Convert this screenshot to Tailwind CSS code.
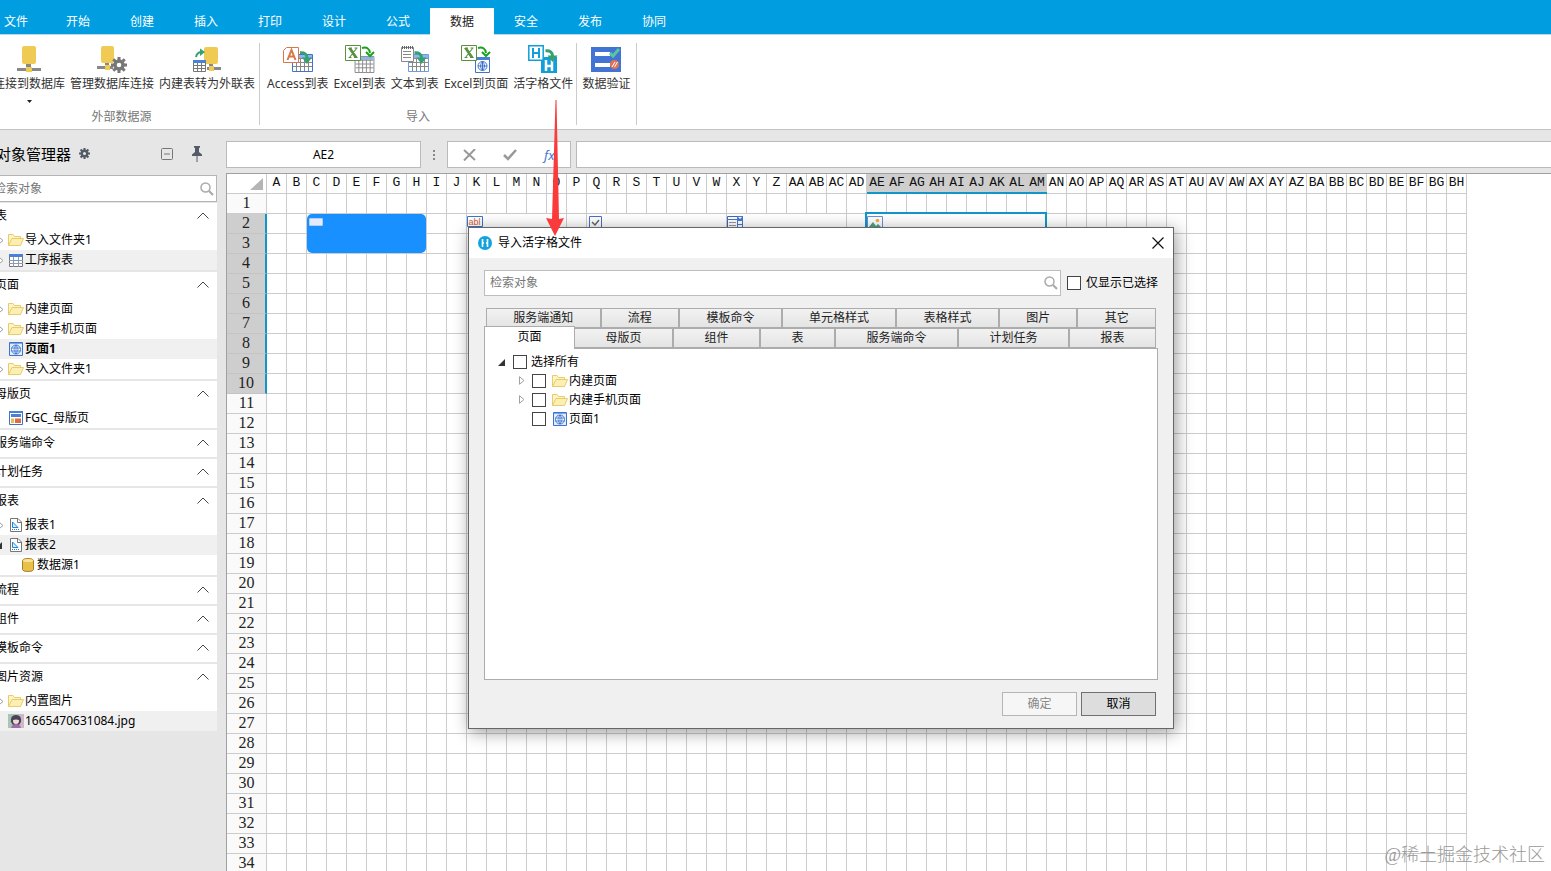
<!DOCTYPE html>
<html lang="zh-CN">
<head>
    <meta charset="UTF-8">
    <meta name="viewport" content="width=device-width, initial-scale=1.0">
    <title>活字格设计器</title>
    <script src="https://cdn.jsdelivr.net/npm/@tailwindcss/browser@4"></script>
</head>
<body class="relative flex flex-col h-screen overflow-hidden bg-[#e6e6e6] text-[12px] leading-4 text-black font-['Noto_Sans','Noto_Sans_CJK_SC',sans-serif]">

    <!-- icons -->
    <svg class="hidden">
        <symbol id="folder" viewBox="0 0 16 14">
            <path d="M.5 12.5V1.5H5l1.500 2h6v2.500" fill="#fdf3c4" stroke="#e8cb6a"/>
            <path d="M.5 12.500 4 5.500h11.500L12.500 12.500z" fill="#fcefb4" stroke="#e8cb6a"/>
        </symbol>
        <symbol id="page" viewBox="0 0 14 14">
            <path d="M.5.5h13v13H.5z" fill="#e4edfb" stroke="#3b73cf"/>
            <path d="M1 1h12v1H1z" fill="#7ea6e6"/>
            <circle cx="7" cy="7.500" r="4.500" fill="#fff" stroke="#3b73cf"/>
            <path d="M2.500 6h9M2.500 9h9M7 3v9M7 3Q3 7.500 7 12M7 3q4 4.500 0 9" fill="none" stroke="#3b73cf" stroke-width=".8"/>
        </symbol>
        <symbol id="table" viewBox="0 0 14 13">
            <path d="M.5.5h13v12H.5z" fill="#fff" stroke="#777"/>
            <path d="M0 0h14v3H0z" fill="#4a80d8"/>
            <path d="M0 6.500h14M0 9.500h14M4.500 3v10M9.500 3v10" stroke="#8a9bb5"/>
        </symbol>
        <symbol id="master" viewBox="0 0 14 14">
            <path d="M.5.5h13v13H.5z" fill="#fff" stroke="#3b73cf"/>
            <path d="M0 0h14v2H0zM2 3h10v3H2z" fill="#4a80d8"/>
            <path d="M2 7.500h3v4.500H2z" fill="#efb94e"/><path d="M6 7.500h6v4.500H6z" fill="#dd6b45"/>
        </symbol>
        <symbol id="report" viewBox="0 0 12 14">
            <path d="M.5.5H8L11.500 4v9.500H.5z" fill="#fff" stroke="#777"/><path d="M7.500.5v4h4" fill="none" stroke="#777"/>
            <path d="M2.500 4v5.500H8z" fill="#d7ebfb" stroke="#2284d8"/>
            <path d="M2 11.500h8" stroke="#2284d8" stroke-dasharray="1 1"/>
        </symbol>
        <symbol id="up" viewBox="0 0 12 7"><path d="M.5 6.500 6 1l5.500 5.500" fill="none" stroke="#444"/></symbol>
        <symbol id="closed" viewBox="0 0 6 9"><path d="M.5.700v7.600L5 4.500z" fill="#fff" stroke="#a0a0a0"/></symbol>
        <symbol id="opened" viewBox="0 0 7 7"><path d="M7 0v7H0z" fill="#333"/></symbol>
        <symbol id="search" viewBox="0 0 14 14"><circle cx="5.500" cy="5.500" r="4.500" fill="none" stroke="#aaa" stroke-width="1.500"/><path d="m9 9 4 4" stroke="#aaa" stroke-width="2.200"/></symbol>
        <symbol id="gear" viewBox="0 0 16 16">
            <circle cx="8" cy="8" r="4" fill="none" stroke="currentColor" stroke-width="3.400"/>
            <path d="M8 0v3M8 13v3M0 8h3M13 8h3M2.300 2.300l2.200 2.200M11.500 11.500l2.200 2.200M13.700 2.300l-2.200 2.200M4.500 11.500l-2.200 2.200" stroke="currentColor" stroke-width="3"/>
        </symbol>
        <symbol id="grid" viewBox="0 0 21 18">
            <path d="M.5.5h20v17H.5z" fill="#fff" stroke="currentColor"/><path d="M1 1h19v3H1z" fill="#8fb4ef"/>
            <path d="M1 4.500h19M1 8.500h19M1 12.500h19M4.500 4v13M8.500 4v13M12.500 4v13M16.500 4v13" stroke="#888"/>
        </symbol>
        <symbol id="excel" viewBox="0 0 16 16">
            <path d="M.5.5h15v15H.5z" fill="#fff" stroke="#5a9140"/>
            <path d="M4 3.500h2l6 9h-2zM4 3h3M9.500 3h3M3.500 12.500h3M9 12.500h3.500M11.500 3.500 4.500 12.500" stroke="#5a9140" stroke-width="1.100" fill="#5a9140"/>
        </symbol>
        <symbol id="curve" viewBox="0 0 12 13"><path d="M0 1.800q7-.5 7 5.200" fill="none" stroke="currentColor" stroke-width="3"/><path d="M2 6.500h10L7 13z" fill="currentColor"/></symbol>
    </svg>

    <!-- menu tabs -->
    <nav class="flex shrink-0 items-end h-[34px] bg-[#019de1] text-white">
        <a href="#" class="w-[46px] pl-1 h-[26px] leading-7">文件</a>
        <a href="#" class="w-16 h-[26px] leading-7 text-center">开始</a>
        <a href="#" class="w-16 h-[26px] leading-7 text-center">创建</a>
        <a href="#" class="w-16 h-[26px] leading-7 text-center">插入</a>
        <a href="#" class="w-16 h-[26px] leading-7 text-center">打印</a>
        <a href="#" class="w-16 h-[26px] leading-7 text-center">设计</a>
        <a href="#" class="w-16 h-[26px] leading-7 text-center">公式</a>
        <a href="#" class="relative w-16 h-[27px] -mb-px leading-7 text-center bg-white text-[#222]">数据</a>
        <a href="#" class="w-16 h-[26px] leading-7 text-center">安全</a>
        <a href="#" class="w-16 h-[26px] leading-7 text-center">发布</a>
        <a href="#" class="w-16 h-[26px] leading-7 text-center">协同</a>
    </nav>

    <!-- ribbon -->
    <section class="flex shrink-0 h-24 pt-2 pb-1 bg-white border-t border-b border-t-[#b9d9ea] border-b-[#c4c4c4] text-[#333] whitespace-nowrap">
        <div class="flex flex-col justify-between w-[260px] border-r border-[#ccc]">
            <div class="flex items-start gap-[5px] -ml-[7px]">
                <button class="flex flex-col items-center">
                    <svg class="w-[30px] h-7 mt-[2px] mb-[3px]" viewBox="0 0 30 28"><rect x="8" y="1" width="14" height="18" rx="2" fill="#efcb55"/><path d="M12 19h5v4h-5zM3 23h24v3H3z" fill="#888"/><path d="M12 22h6v5h-6z" fill="#efcb55"/></svg>
                    连接到数据库
                    <svg class="w-[5px] h-[3px] mt-2" viewBox="0 0 5 3"><path d="M0 0h5L2.500 3z" fill="#222"/></svg>
                </button>
                <button class="flex flex-col items-center">
                    <svg class="w-[30px] h-7 mt-[2px] mb-[3px] text-[#777]" viewBox="0 0 30 28"><rect x="4" y="1" width="13" height="17" rx="2" fill="#efcb55"/><path d="M8 18h4v3H8zM0 21h16v3H0z" fill="#888"/><path d="M8 20h5v5H8z" fill="#efcb55"/><use href="#gear" x="14" y="12" width="16" height="16"/></svg>
                    管理数据库连接
                </button>
                <button class="flex flex-col items-center">
                    <svg class="w-[30px] h-7 mt-[2px] mb-[3px]" viewBox="0 0 30 28"><rect x="12" y="2" width="14" height="17" rx="2" fill="#efcb55"/><path d="M17 19h4v3h-4zM15 22h14v3H15z" fill="#888"/><path d="M17 21h5v5h-5z" fill="#efcb55"/><path d="M4 12q1-5 6-5" fill="none" stroke="#35a071" stroke-width="2"/><path d="M8 3.500 13 7l-5 4z" fill="#35a071"/><path d="M1.500 15.500h12v11h-12z" fill="#fff" stroke="#777"/><path d="M1 15h13v3H1z" fill="#4a80d8"/><path d="M1 20.500h13M1 23.500h13M5.500 18v9M9.500 18v9" stroke="#777"/></svg>
                    内建表转为外联表
                </button>
            </div>
            <div class="pr-4 text-center text-[#777]">外部数据源</div>
        </div>
        <div class="flex flex-col justify-between w-[317px] border-r border-[#ccc]">
            <div class="flex items-start gap-[5px] pl-[7px]">
                <button class="flex flex-col items-center">
                    <svg class="w-[30px] h-7 mt-[2px] mb-[3px]" viewBox="0 0 30 28"><use href="#grid" x="9" y="9" width="21" height="18" class="text-[#3b73cf]"/><path d="M3.500 2.500h12v15h-15v-12z" fill="#fff" stroke="#da7647"/><path d="m4.500 15 4-10 4 10M6 11.500h5" fill="none" stroke="#da7647" stroke-width="2"/><use href="#curve" x="17" y="6" width="12" height="13" class="text-[#35a071]"/></svg>
                    Access到表
                </button>
                <button class="flex flex-col items-center">
                    <svg class="w-[30px] h-7 mt-[2px] mb-[3px]" viewBox="0 0 30 28"><use href="#grid" x="9" y="11" width="21" height="17" class="text-[#888]"/><use href="#excel" x="0" y="0" width="16" height="16"/><path d="M17 3q7-2 8 5" fill="none" stroke="#18a418" stroke-width="2"/><path d="m21 7 4 4 4-4" fill="none" stroke="#18a418" stroke-width="2"/></svg>
                    Excel到表
                </button>
                <button class="flex flex-col items-center">
                    <svg class="w-[30px] h-7 mt-[2px] mb-[3px]" viewBox="0 0 30 28"><use href="#grid" x="8" y="9" width="21" height="18" class="text-[#6b9be8]"/><path d="M1.500 2.500h12v14h-12z" fill="#fff" stroke="#888"/><path d="M2 2.500h12" stroke="#666" stroke-width="3" stroke-dasharray="1 1"/><path d="M3 6.500h8M3 9.500h8M3 12.500h8" stroke="#888"/><use href="#curve" x="14" y="6" width="13" height="13" class="text-[#35a071]"/></svg>
                    文本到表
                </button>
                <button class="flex flex-col items-center">
                    <svg class="w-[30px] h-7 mt-[2px] mb-[3px]" viewBox="0 0 30 28"><path d="M14.500 12.500h14v15h-14z" fill="#fff" stroke="#3b73cf"/><path d="M14 12h15v3H14z" fill="#4a80d8"/><circle cx="21.500" cy="21" r="4.500" fill="#fff" stroke="#3b73cf"/><path d="M17 21h9M21.500 16.500v9M21.500 16.500q-4 4.500 0 9M21.500 16.500q4 4.500 0 9" fill="none" stroke="#3b73cf"/><use href="#excel" x="0" y="0" width="16" height="16"/><path d="M17 3q7-2 8 5" fill="none" stroke="#18a418" stroke-width="2"/><path d="m21 7 4 4 4-4" fill="none" stroke="#18a418" stroke-width="2"/></svg>
                    Excel到页面
                </button>
                <button class="flex flex-col items-center">
                    <svg class="w-[30px] h-7 mt-[2px] mb-[3px]" viewBox="0 0 30 28"><path d="M13 12h16v16H13z" fill="#109fdb"/><path d="M18 15v11M24 15v11M18 21h6" stroke="#fff" stroke-width="2.500"/><path d="M.8.8h14.400v14.400H.800z" fill="#fff" stroke="#109fdb" stroke-width="1.500"/><path d="M5 3v10M11 3v10M5 8h6" stroke="#109fdb" stroke-width="2"/><use href="#curve" x="17" y="4" width="13" height="13" class="text-[#35a071]"/></svg>
                    活字格文件
                </button>
            </div>
            <div class="text-center text-[#777]">导入</div>
        </div>
        <div class="w-[60px] border-r border-[#ccc]">
            <button class="flex flex-col items-center mx-auto">
                <svg class="w-[30px] h-7 mt-[2px] mb-[3px]" viewBox="0 0 30 28"><path d="M0 2h30v25H0z" fill="#4274d4"/><path d="M4 7h15v4H4zM4 18h15v4H4z" fill="#fff"/><path d="m19 8 3 3 6-7" fill="none" stroke="#59c6a0" stroke-width="3"/><circle cx="23.500" cy="19.500" r="4.500" fill="#e5744e"/><path d="m21 22 3-5M23.500 22l3-5" stroke="#fff"/></svg>
                数据验证
            </button>
        </div>
    </section>

    <div class="flex flex-1 min-h-0">
        <!-- object manager -->
        <aside class="w-[226px] shrink-0 pr-[9px] overflow-hidden whitespace-nowrap">
            <div class="flex items-center h-[45px] pt-[2px] text-[15px] text-[#555b66]">
                <h2 class="-ml-1 mr-2 text-black">对象管理器</h2>
                <svg class="w-[11px] h-[11px]"><use href="#gear"/></svg>
                <svg class="w-3 h-3 ml-auto mr-[18px]" viewBox="0 0 12 12"><rect x=".5" y=".5" width="11" height="11" rx="1" fill="none" stroke="#777"/><path d="M3 6h6" stroke="#777"/></svg>
                <svg class="w-3 h-4 mr-[14px]" viewBox="0 0 12 16"><path d="M3 0h6v1.500L8 2v4l3 2.500V10H1V8.500L4 6V2L3 1.500zM5.500 10h1v6h-1z" fill="#555b66"/></svg>
            </div>
            <div class="flex items-center -ml-[10px] pr-[2px] h-[27px] border border-[#b5b5b5] bg-white">
                <input type="text" aria-label="检索对象" placeholder="检索对象" class="flex-1 min-w-0 pl-[3px] outline-none placeholder:text-[#777]">
                <svg class="w-[14px] h-[14px]"><use href="#search"/></svg>
            </div>
            <div class="flex flex-col gap-[2px] -ml-[5px] mt-px">
                <section class="bg-white">
                    <button class="flex w-full h-[27px] items-center justify-between pr-2 pb-[2px]">表<svg class="w-3 h-[7px]"><use href="#up"/></svg></button>
                    <a href="#" class="flex h-5 items-center pl-[3px]"><svg class="w-[6px] h-[9px] mr-1"><use href="#closed"/></svg><svg class="w-4 h-[14px] mr-px"><use href="#folder"/></svg>导入文件夹1</a>
                    <a href="#" class="flex h-5 items-center pl-[3px] bg-[#f0f0f0]"><svg class="w-[6px] h-[9px] mr-[5px]"><use href="#closed"/></svg><svg class="w-[14px] h-[13px] mr-[2px]"><use href="#table"/></svg>工序报表</a>
                </section>
                <section class="bg-white">
                    <button class="flex w-full h-[27px] items-center justify-between pr-2 pb-[2px]">页面<svg class="w-3 h-[7px]"><use href="#up"/></svg></button>
                    <a href="#" class="flex h-5 items-center pl-[3px]"><svg class="w-[6px] h-[9px] mr-1"><use href="#closed"/></svg><svg class="w-4 h-[14px] mr-px"><use href="#folder"/></svg>内建页面</a>
                    <a href="#" class="flex h-5 items-center pl-[3px]"><svg class="w-[6px] h-[9px] mr-1"><use href="#closed"/></svg><svg class="w-4 h-[14px] mr-px"><use href="#folder"/></svg>内建手机页面</a>
                    <a href="#" class="flex h-5 items-center pl-[14px] bg-[#f0f0f0] font-bold"><svg class="w-[14px] h-[14px] mr-[2px]"><use href="#page"/></svg>页面1</a>
                    <a href="#" class="flex h-5 items-center pl-[3px]"><svg class="w-[6px] h-[9px] mr-1"><use href="#closed"/></svg><svg class="w-4 h-[14px] mr-px"><use href="#folder"/></svg>导入文件夹1</a>
                </section>
                <section class="bg-white">
                    <button class="flex w-full h-[27px] items-center justify-between pr-2 pb-[2px]">母版页<svg class="w-3 h-[7px]"><use href="#up"/></svg></button>
                    <a href="#" class="flex h-5 items-center pl-[14px]"><svg class="w-[14px] h-[14px] mr-[2px]"><use href="#master"/></svg>FGC_母版页</a>
                </section>
                <section class="bg-white">
                    <button class="flex w-full h-[27px] items-center justify-between pr-2 pb-[2px]">服务端命令<svg class="w-3 h-[7px]"><use href="#up"/></svg></button>
                </section>
                <section class="bg-white">
                    <button class="flex w-full h-[27px] items-center justify-between pr-2 pb-[2px]">计划任务<svg class="w-3 h-[7px]"><use href="#up"/></svg></button>
                </section>
                <section class="bg-white">
                    <button class="flex w-full h-[27px] items-center justify-between pr-2 pb-[2px]">报表<svg class="w-3 h-[7px]"><use href="#up"/></svg></button>
                    <a href="#" class="flex h-5 items-center pl-[3px]"><svg class="w-[6px] h-[9px] mr-[6px]"><use href="#closed"/></svg><svg class="w-3 h-[14px] mr-[3px]"><use href="#report"/></svg>报表1</a>
                    <a href="#" class="flex h-5 items-center bg-[#f0f0f0]"><svg class="w-[7px] h-[7px] mr-2"><use href="#opened"/></svg><svg class="w-3 h-[14px] mr-[3px]"><use href="#report"/></svg>报表2</a>
                    <a href="#" class="flex h-5 items-center pl-[27px]"><svg class="w-3 h-[14px] mr-[3px]" viewBox="0 0 12 14"><path d="M.5 2.500q0-2 5.500-2t5.500 2v9q0 2-5.500 2t-5.500-2z" fill="#eac04c" stroke="#a98020"/><ellipse cx="6" cy="2.500" rx="5" ry="1.500" fill="#f9e29a"/></svg>数据源1</a>
                </section>
                <section class="bg-white">
                    <button class="flex w-full h-[27px] items-center justify-between pr-2 pb-[2px]">流程<svg class="w-3 h-[7px]"><use href="#up"/></svg></button>
                </section>
                <section class="bg-white">
                    <button class="flex w-full h-[27px] items-center justify-between pr-2 pb-[2px]">组件<svg class="w-3 h-[7px]"><use href="#up"/></svg></button>
                </section>
                <section class="bg-white">
                    <button class="flex w-full h-[27px] items-center justify-between pr-2 pb-[2px]">模板命令<svg class="w-3 h-[7px]"><use href="#up"/></svg></button>
                </section>
                <section class="bg-white">
                    <button class="flex w-full h-[27px] items-center justify-between pr-2 pb-[2px]">图片资源<svg class="w-3 h-[7px]"><use href="#up"/></svg></button>
                    <a href="#" class="flex h-5 items-center pl-[3px]"><svg class="w-[6px] h-[9px] mr-1"><use href="#closed"/></svg><svg class="w-4 h-[14px] mr-px"><use href="#folder"/></svg>内置图片</a>
                    <a href="#" class="flex h-5 items-center pl-[13px] bg-[#f0f0f0]"><svg class="w-4 h-[14px] mr-px" viewBox="0 0 16 14"><path d="M0 0h16v14H0z" fill="#a9c6b4"/><path d="M11 0h5v14h-5z" fill="#cfb6c9"/><path d="M3 8q-1-7 5-7t5 7l-2 3H5z" fill="#4d4358"/><circle cx="8" cy="7" r="3" fill="#f3d9d3"/><path d="M5 6q3-1 6 0V4H5z" fill="#4d4358"/><path d="M3 14q1-4 5-4t5 4z" fill="#9d6fa6"/></svg>1665470631084.jpg</a>
                </section>
            </div>
        </aside>

        <main class="flex flex-col flex-1 min-w-0 pt-[11px]">
            <!-- formula bar -->
            <div class="flex shrink-0 h-[27px]">
                <input type="text" aria-label="名称框" value="AE2" class="w-[195px] border border-[#bbb] bg-white text-center">
                <div class="flex flex-col items-center justify-center gap-[2px] w-[26px]">
                    <i class="w-[2px] h-[2px] bg-[#888]"></i><i class="w-[2px] h-[2px] bg-[#888]"></i><i class="w-[2px] h-[2px] bg-[#888]"></i>
                </div>
                <div class="flex items-center gap-[27px] w-[124px] pl-[15px] border border-[#bbb] bg-white">
                    <button aria-label="取消输入"><svg class="w-[13px] h-3" viewBox="0 0 13 12"><path d="m1 1 11 10M12 0 1 11.500" stroke="#999" stroke-width="2"/></svg></button>
                    <button aria-label="确认输入"><svg class="w-[14px] h-3" viewBox="0 0 14 12"><path d="m1 6 4 4 8-9" fill="none" stroke="#999" stroke-width="2.500"/></svg></button>
                    <button class="text-[#4477cf] text-[13px] italic">fx</button>
                </div>
                <input type="text" aria-label="编辑栏" class="flex-1 min-w-0 ml-[5px] border border-r-0 border-[#bbb] bg-white">
            </div>

            <!-- sheet -->
            <div class="relative flex-1 min-h-0 mt-[5px] border-t border-l border-[#a0a0a0] bg-white overflow-hidden">
                <table class="table-fixed border-separate border-spacing-0 w-[1240px]">
                    <thead><tr id="cols"></tr></thead>
                    <tbody id="rows"></tbody>
                </table>
                <div class="absolute left-20 top-10 w-[119px] h-[39px] rounded-[5px] bg-[#1890ff]">
                    <div class="w-[14px] h-2 mt-1 ml-[2px] rounded-[1px] bg-[#e3ebfb] border border-[#b4cdf5]"></div>
                </div>
                <div class="absolute left-[638px] top-[38px] w-[182px] h-[43px] border-2 border-[#1296c9]"></div>
            </div>
        </main>
    </div>

    <!-- import dialog -->
    <div role="dialog" aria-labelledby="dlgTitle" class="absolute left-[468px] top-[227px] w-[706px] flex flex-col border border-[#666] bg-[#f0f0f0] shadow-[2px_3px_16px_rgba(0,0,0,0.4)]">
        <div class="flex items-center h-[30px] pl-[9px] pr-[9px] bg-white">
            <svg class="w-[14px] h-[14px] mr-[6px]" viewBox="0 0 14 14"><circle cx="7" cy="7" r="7" fill="#12a3dd"/><path d="M4.500 3v8M9.500 3v8M4.500 7h1.500M8 7h1.500" stroke="#fff" stroke-width="1.600"/></svg>
            <h3 id="dlgTitle">导入活字格文件</h3>
            <button aria-label="关闭" class="ml-auto"><svg class="w-3 h-3" viewBox="0 0 12 12"><path d="m.5.5 11 11M11.500.5l-11 11" stroke="#111" stroke-width="1.200"/></svg></button>
        </div>
        <div class="flex items-center mt-3 px-[15px]">
            <div class="flex flex-1 items-center h-[26px] pl-[5px] pr-[2px] border border-[#bdbdbd] bg-white">
                <input type="text" aria-label="检索对象" placeholder="检索对象" class="flex-1 outline-none placeholder:text-[#777]">
                <svg class="w-[14px] h-[14px]"><use href="#search"/></svg>
            </div>
            <input type="checkbox" id="onlySel" class="appearance-none w-[14px] h-[14px] ml-[6px] mr-[5px] border border-[#444] bg-white">
            <label for="onlySel">仅显示已选择</label>
        </div>
        <div class="mt-3 px-[15px]">
            <div class="flex h-5 pl-[2px] pr-[2px] text-[#222]">
                <button class="flex-auto border border-[#acacac] bg-linear-to-b from-[#f2f2f2] to-[#e4e4e4]">服务端通知</button>
                <button class="flex-auto border border-[#acacac] bg-linear-to-b from-[#f2f2f2] to-[#e4e4e4]">流程</button>
                <button class="flex-auto border border-[#acacac] bg-linear-to-b from-[#f2f2f2] to-[#e4e4e4]">模板命令</button>
                <button class="flex-auto border border-[#acacac] bg-linear-to-b from-[#f2f2f2] to-[#e4e4e4]">单元格样式</button>
                <button class="flex-auto border border-[#acacac] bg-linear-to-b from-[#f2f2f2] to-[#e4e4e4]">表格样式</button>
                <button class="flex-auto border border-[#acacac] bg-linear-to-b from-[#f2f2f2] to-[#e4e4e4]">图片</button>
                <button class="flex-auto border border-[#acacac] bg-linear-to-b from-[#f2f2f2] to-[#e4e4e4]">其它</button>
            </div>
            <div class="flex h-5 pr-[2px] text-[#222]">
                <button class="relative flex-auto -mt-[2px] -mb-px px-[2px] pb-[2px] border border-b-0 border-[#acacac] bg-white text-black">页面</button>
                <button class="flex-auto border border-l-0 border-[#acacac] bg-linear-to-b from-[#f2f2f2] to-[#e4e4e4]">母版页</button>
                <button class="flex-auto border border-[#acacac] bg-linear-to-b from-[#f2f2f2] to-[#e4e4e4]">组件</button>
                <button class="flex-auto border border-[#acacac] bg-linear-to-b from-[#f2f2f2] to-[#e4e4e4]">表</button>
                <button class="flex-auto border border-[#acacac] bg-linear-to-b from-[#f2f2f2] to-[#e4e4e4]">服务端命令</button>
                <button class="flex-auto border border-[#acacac] bg-linear-to-b from-[#f2f2f2] to-[#e4e4e4]">计划任务</button>
                <button class="flex-auto border border-[#acacac] bg-linear-to-b from-[#f2f2f2] to-[#e4e4e4]">报表</button>
            </div>
            <div class="h-[332px] pt-1 border border-[#acacac] bg-white">
                <div class="flex items-center h-[18px] pl-[13px]"><svg class="w-[7px] h-[7px] mr-2"><use href="#opened"/></svg><input type="checkbox" id="all" class="appearance-none w-[14px] h-[14px] mr-1 border border-[#444] bg-white"><label for="all">选择所有</label></div>
                <div class="flex items-center h-[19px] pl-[34px]"><svg class="w-[6px] h-[9px] mr-[7px]"><use href="#closed"/></svg><input type="checkbox" id="p1" class="appearance-none w-[14px] h-[14px] mr-[6px] border border-[#444] bg-white"><label for="p1" class="flex items-center"><svg class="w-4 h-[14px] mr-px"><use href="#folder"/></svg>内建页面</label></div>
                <div class="flex items-center h-[19px] pl-[34px]"><svg class="w-[6px] h-[9px] mr-[7px]"><use href="#closed"/></svg><input type="checkbox" id="p2" class="appearance-none w-[14px] h-[14px] mr-[6px] border border-[#444] bg-white"><label for="p2" class="flex items-center"><svg class="w-4 h-[14px] mr-px"><use href="#folder"/></svg>内建手机页面</label></div>
                <div class="flex items-center h-[19px] pl-[47px]"><input type="checkbox" id="p3" class="appearance-none w-[14px] h-[14px] mr-[7px] border border-[#444] bg-white"><label for="p3" class="flex items-center"><svg class="w-[14px] h-[14px] mr-[2px]"><use href="#page"/></svg>页面1</label></div>
            </div>
        </div>
        <div class="flex justify-end gap-1 pt-3 pb-3 pr-[17px]">
            <button disabled class="w-[75px] h-6 border border-[#b5b5b5] bg-[#f6f6f6] text-[#888]">确定</button>
            <button class="w-[75px] h-6 border border-[#707070] bg-[#dddddd]">取消</button>
        </div>
    </div>

    <!-- pointer to the dialog -->
    <svg class="absolute left-[546px] top-[100px] w-[18px] h-[136px]" viewBox="0 0 18 136"><path d="M9.500 0h1L13 119l5-1-9 18-9-18 6 1z" fill="#fb3b3b"/></svg>

    <div class="absolute right-[6px] bottom-1 text-[18px] leading-6 font-light text-[#999] font-['Liberation_Serif','Noto_Sans_CJK_SC',serif]">@稀土掘金技术社区</div>

    <script>
        const COLS = 60, ROWS = 34;

        function colName(n) {
            const c = i => String.fromCharCode(65 + i);
            return n < 26 ? c(n) : c(Math.floor(n / 26) - 1) + c(n % 26);
        }

        // merged cells of row 2: start column -> span and icon
        const merged = {
            10: [5, '<path d="M.5.5h15v10H.5z" fill="#fff" stroke="#3b73cf"/><text x="1.500" y="9" font-size="9" font-family="Liberation Sans" fill="#cf5a35">abl</text>'],
            16: [7, '<path d="M2.500.5h12v12h-12z" fill="#fff" stroke="#4a6fcf"/><path d="m5 6 3 3 4-5" fill="none" stroke="#666" stroke-width="1.500"/>'],
            23: [6, '<path d="M.5.5h15v13H.5z" fill="#fff" stroke="#3b66c8"/><path d="M10 0h6v14h-6zM0 3h10v1H0z" fill="#4a78d2"/><path d="M2 6.500h7M2 9.500h7" stroke="#999"/><path d="M11 5h4v3h-4zM11 9h4v3h-4zM11 1h4L13 3z" fill="#fff"/>'],
            30: [9, '<path d="M.5.5h15v14H.5z" fill="#fff" stroke="#6b8fdb"/><circle cx="10.500" cy="4.500" r="1.800" fill="#eeb150"/><path d="m1 12 5-6 3 4 2-2 4 4v2H1z" fill="#4fa583"/>']
        };

        let head = '<th class="w-10 h-5 p-0 border-r border-b border-[#ccc] bg-white"><svg class="w-[14px] h-3 ml-[23px]" viewBox="0 0 14 12"><path d="M13 0v12H0z" fill="#b5b5b5"/></svg></th>';
        for (let c = 0; c < COLS; c++) {
            const sel = c >= 30 && c <= 38;
            head += `<th class="${sel ? 'w-5 h-5 p-0 border-b-2 border-[#1296c9] bg-[#cecece]' : 'w-5 h-5 p-0 pb-px border-r border-b border-[#ccc] bg-white'} text-[13px] leading-[18px] font-normal text-[#111] font-['Liberation_Mono',monospace]">${colName(c)}</th>`;
        }
        document.getElementById('cols').innerHTML = head;

        let body = '';
        for (let r = 1; r <= ROWS; r++) {
            const sel = r >= 2 && r <= 10;
            body += `<tr><th class="${sel ? 'h-5 p-0 pb-px border-r-2 border-b border-r-[#1296c9] border-b-[#c4c4c4] bg-[#cecece]' : 'h-5 p-0 pb-px border-r border-b border-[#ccc] bg-[#fafafa]'} text-[16px] leading-[18px] font-normal text-[#222] font-['Liberation_Serif',serif]">${r}</th>`;
            for (let c = 0; c < COLS; c++) {
                const m = r === 2 && merged[c];
                if (m) {
                    body += `<td colspan="${m[0]}" class="h-5 p-0 align-top border-r border-b border-[#ccc]"><svg class="block w-4 h-[15px] mt-[2px]" viewBox="0 0 16 15">${m[1]}</svg></td>`;
                    c += m[0] - 1;
                } else {
                    body += '<td class="h-5 p-0 border-r border-b border-[#ccc]"></td>';
                }
            }
            body += '</tr>';
        }
        document.getElementById('rows').innerHTML = body;
    </script>
</body>
</html>
